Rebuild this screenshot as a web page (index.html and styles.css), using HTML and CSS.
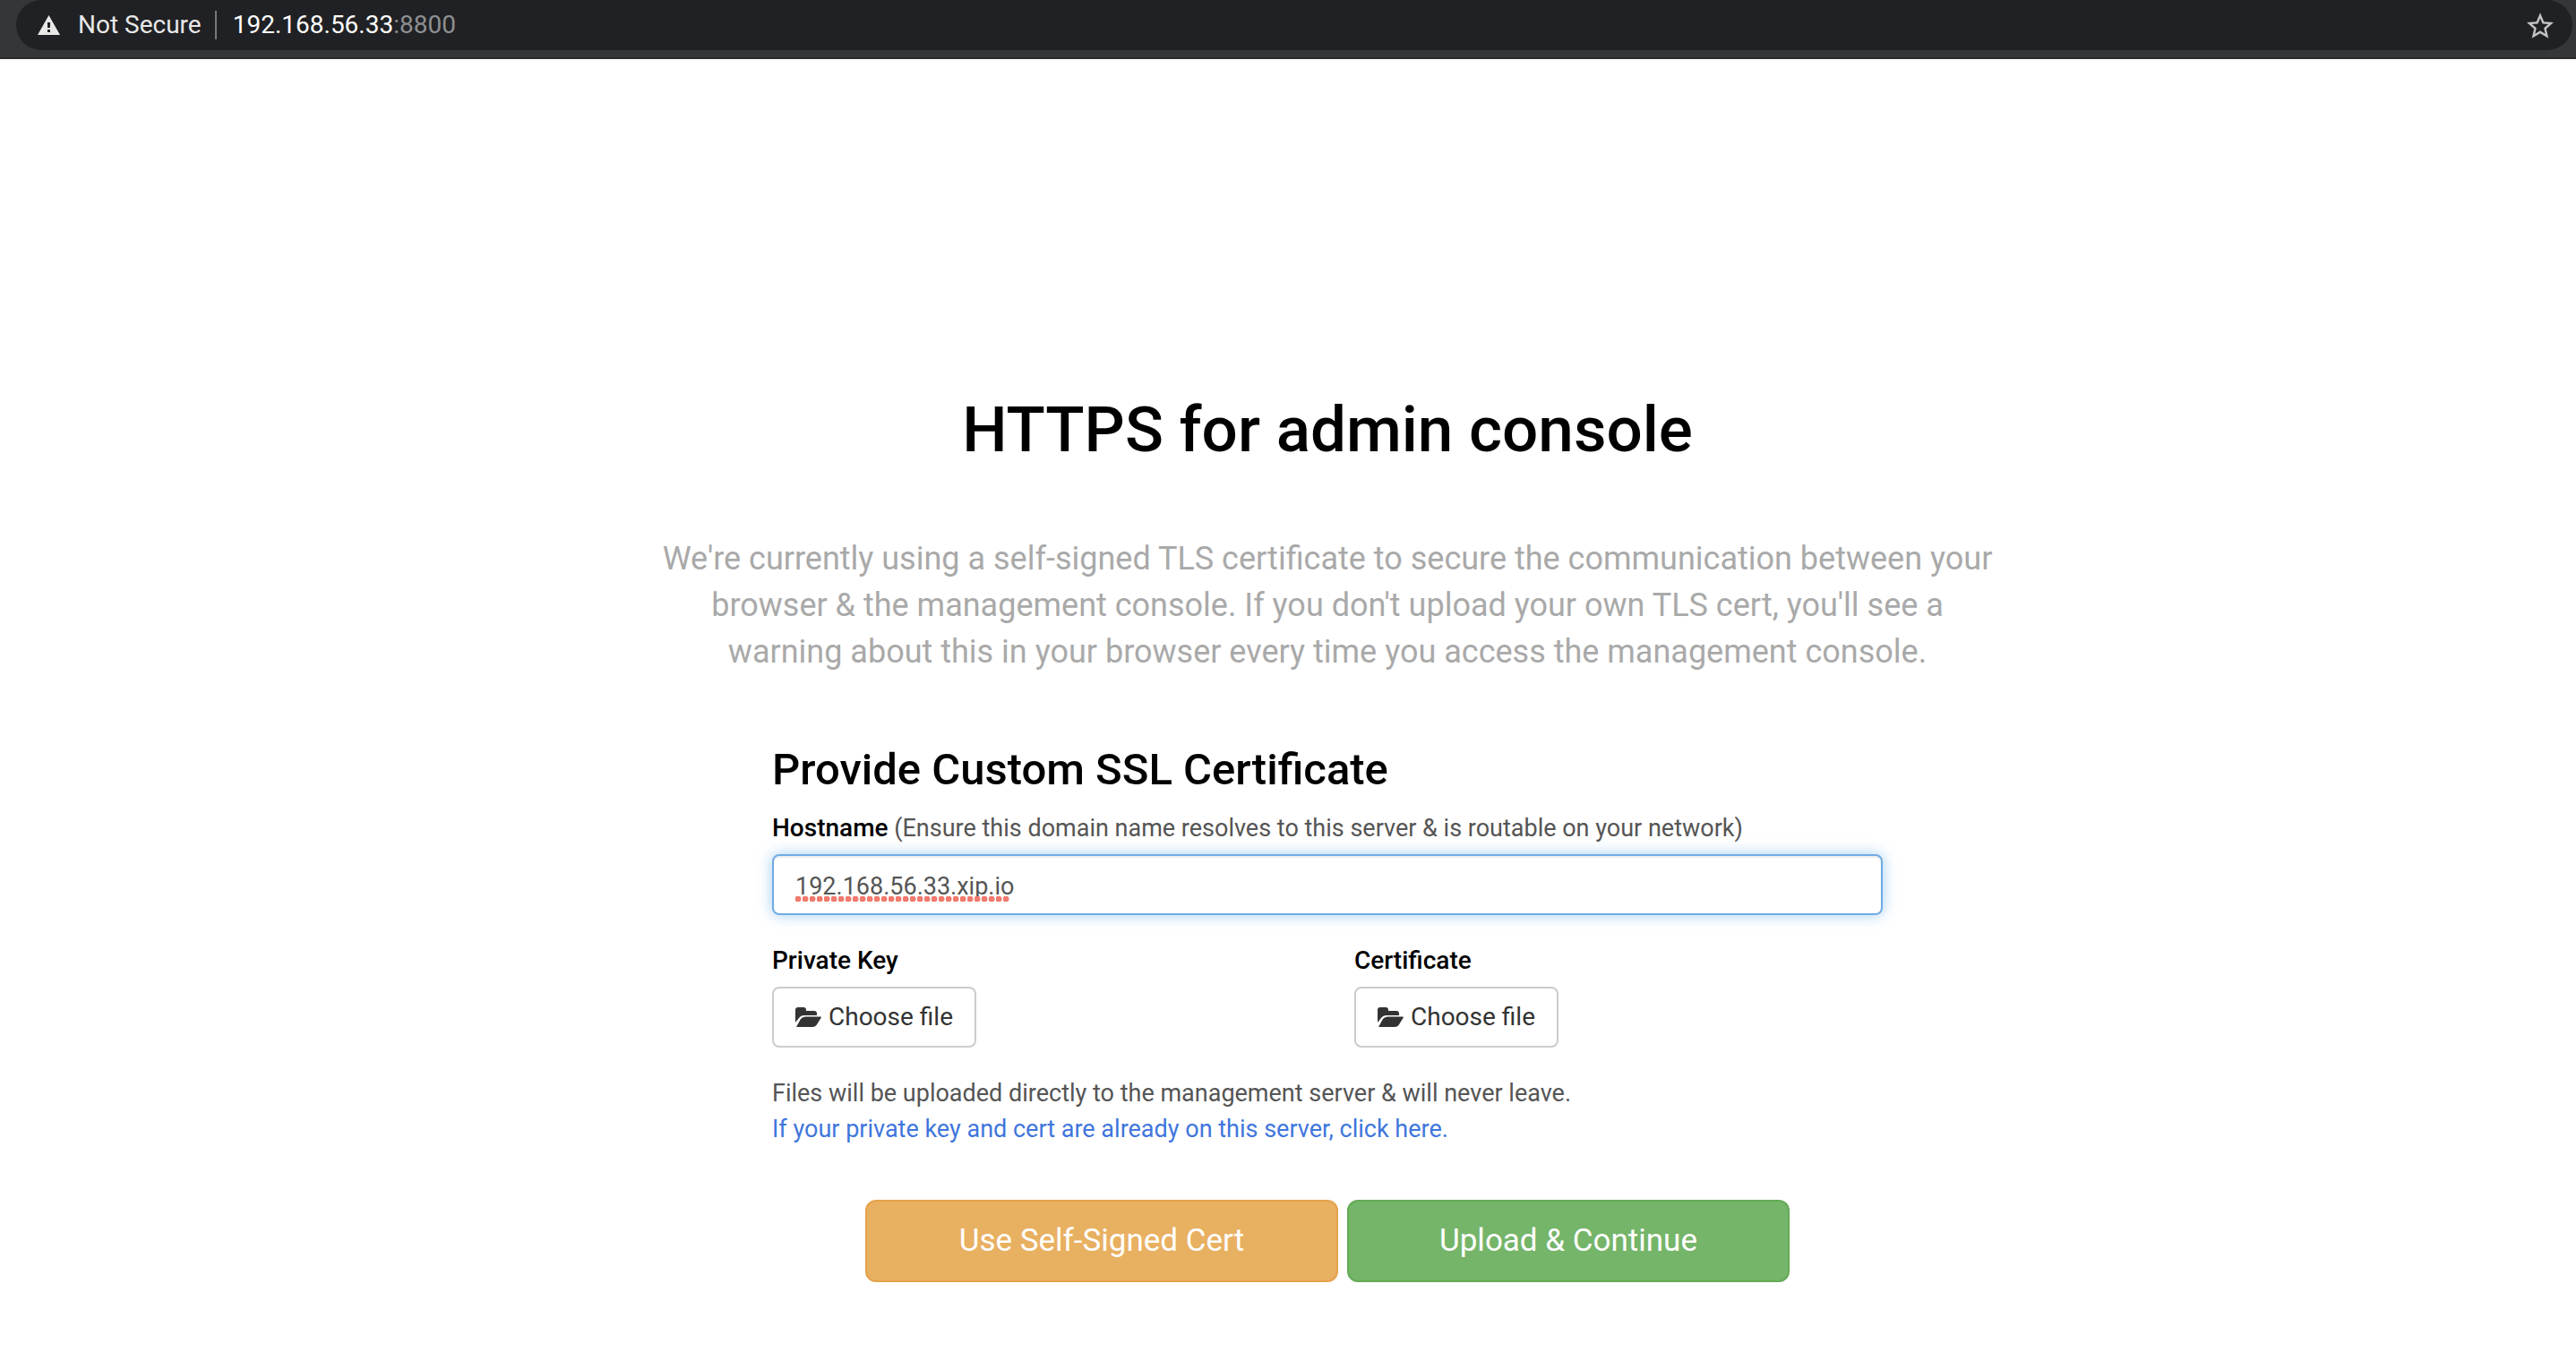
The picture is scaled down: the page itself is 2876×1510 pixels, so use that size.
FILE: index.html
```html
<!DOCTYPE html>
<html lang="en">
<head>
  <meta charset="utf-8">
  <title>HTTPS for admin console</title>
  <link rel="stylesheet" href="styles.css">
</head>
<body>
  <header class="toolbar">
    <div class="omnibox">
      <svg class="warning-icon" viewBox="0 0 25 22" aria-hidden="true">
        <path fill="currentColor" fill-rule="evenodd" d="M12.500 0L25 22H0ZM11 8V14H14V8ZM11 16V19H14V16Z"/>
      </svg>
      <span class="security">Not Secure</span>
      <span class="address">192.168.56.33<span class="port">:8800</span></span>
      <button class="bookmark" type="button" aria-label="Bookmark this page">
        <svg viewBox="2 2 20 19" aria-hidden="true">
          <path fill="currentColor" d="M22 9.240l-7.190-.620L12 2 9.190 8.630 2 9.240l5.460 4.730L5.820 21 12 17.270 18.180 21l-1.630-7.030L22 9.240zM12 15.400l-3.760 2.270 1-4.280-3.320-2.880 4.380-.380L12 6.100l1.710 4.040 4.380.380-3.320 2.880 1 4.280L12 15.400z"/>
        </svg>
      </button>
    </div>
  </header>

  <main class="page">
    <h1 class="title">HTTPS for admin console</h1>
    <p class="intro">We're currently using a self-signed TLS certificate to secure the communication between your browser &amp; the management console. If you don't upload your own TLS cert, you'll see a warning about this in your browser every time you access the management console.</p>

    <form class="cert-form">
      <h2 class="subtitle">Provide Custom SSL Certificate</h2>
      <div class="field">
        <div class="label-row">
          <label class="label" for="hostname">Hostname</label>
          <span id="hostname-hint">(Ensure this domain name resolves to this server &amp; is routable on your network)</span>
        </div>
        <div class="input-wrap">
          <input class="input" id="hostname" type="text" value="192.168.56.33.xip.io" aria-describedby="hostname-hint" spellcheck="false">
        </div>
      </div>

      <div class="files">
        <div class="field">
          <label class="label" for="private-key">Private Key</label>
          <button class="choose" id="private-key" type="button">
            <svg class="folder-icon" viewBox="0 0 29 22" aria-hidden="true">
              <path fill="currentColor" d="M0 17V3Q0 0 3 0H9Q12 0 12 3V4H21Q24 4 24 7V9H10Q6 9 4 12ZM1 22L6 13Q8 10.500 11 10.500H28Q29.500 10.500 28.500 12L23.500 20Q22 22 19 22Z"/>
            </svg>
            Choose file
          </button>
        </div>
        <div class="field">
          <label class="label" for="certificate">Certificate</label>
          <button class="choose" id="certificate" type="button">
            <svg class="folder-icon" viewBox="0 0 29 22" aria-hidden="true">
              <path fill="currentColor" d="M0 17V3Q0 0 3 0H9Q12 0 12 3V4H21Q24 4 24 7V9H10Q6 9 4 12ZM1 22L6 13Q8 10.500 11 10.500H28Q29.500 10.500 28.500 12L23.500 20Q22 22 19 22Z"/>
            </svg>
            Choose file
          </button>
        </div>
      </div>

      <p class="note">Files will be uploaded directly to the management server &amp; will never leave.<br>
        <a class="link" href="#server-path">If your private key and cert are already on this server, click here.</a></p>

      <div class="actions">
        <button class="action action-warning" type="button">Use Self-Signed Cert</button>
        <button class="action action-success" type="submit">Upload &amp; Continue</button>
      </div>
    </form>
  </main>
</body>
</html>
```
FILE: styles.css
```css
* {
  box-sizing: border-box;
}

body {
  margin: 0;
  background: #fff;
  color: #555;
  font-family: Roboto, "Liberation Sans", sans-serif;
  font-size: 27px;
  line-height: 40px;
}

h1,
h2,
p {
  margin: 0;
}

button,
input {
  font: inherit;
}

/* Browser address bar */
.toolbar {
  padding: 0 4px 8px 18px;
  background: #35363a;
  border-bottom: 2px solid #292a2c;
}

.omnibox {
  display: flex;
  align-items: center;
  height: 56px;
  padding: 0 21px 0 24px;
  border-radius: 28px;
  background: #202124;
  font-size: 28px;
  line-height: 32px;
}

.warning-icon {
  width: 25px;
  height: 22px;
  color: #e8e8e8;
}

.security {
  margin-left: 20px;
  padding-right: 15px;
  border-right: 2px solid #77787a;
  color: #e8e8e8;
}

.address {
  margin-left: 18px;
  color: #fff;
}

.port {
  color: #8f9092;
}

.bookmark {
  display: flex;
  margin-left: auto;
  padding: 0;
  border: 0;
  background: none;
  color: #c4c4c4;
}

.bookmark svg {
  width: 30px;
  height: 29px;
}

/* Setup page */
.page {
  display: flex;
  flex-direction: column;
  align-items: center;
  padding: 374px 0 78px 88px;
}

.title {
  color: #000;
  font-size: 71px;
  font-weight: 500;
  line-height: 80px;
}

.intro {
  max-width: 1500px;
  margin: 78px 0;
  color: #a9a9a9;
  font-size: 36px;
  line-height: 52px;
  text-align: center;
}

.cert-form {
  display: flex;
  flex-direction: column;
  width: 100%;
  max-width: 1240px;
}

.subtitle {
  margin-bottom: 17px;
  color: #000;
  font-size: 49px;
  font-weight: 500;
  line-height: 56px;
}

.field {
  display: flex;
  flex-direction: column;
  align-items: flex-start;
  gap: 9px;
}

.label {
  color: #000;
  font-size: 28px;
  font-weight: 500;
}

.input-wrap {
  position: relative;
  width: 100%;
}

/* Spell-check marks under the typed hostname */
.input-wrap::after {
  content: "";
  position: absolute;
  top: 47px;
  left: 26px;
  width: 240px;
  height: 6px;
  background: radial-gradient(circle at 3px 3px, #f07a6c 3px, transparent 4px) 0 0 / 8px 6px;
  pointer-events: none;
}

.input {
  display: block;
  width: 100%;
  height: 68px;
  padding: 4px 24px 0;
  border: 2px solid #71abe4;
  border-radius: 8px;
  outline: 0;
  background: #fff;
  box-shadow: inset 0 2px 2px rgba(0, 0, 0, 0.08), 0 0 16px rgba(102, 175, 233, 0.6);
  color: #555;
}

.files {
  display: grid;
  grid-template-columns: 1fr 1fr;
  gap: 60px;
  margin: 31px 0;
}

.choose {
  display: flex;
  align-items: center;
  gap: 8px;
  height: 68px;
  padding: 0 24px;
  border: 2px solid #ccc;
  border-radius: 8px;
  background: #fff;
  color: #333;
  font-size: 28px;
}

.folder-icon {
  width: 29px;
  height: 22px;
}

.link {
  color: #3f76dc;
  text-decoration: none;
}

.actions {
  display: flex;
  justify-content: center;
  gap: 10px;
  margin-top: 59px;
}

.action {
  height: 92px;
  padding: 0 100px;
  border: 2px solid;
  border-radius: 12px;
  color: #fff;
  font-size: 35px;
}

.action-warning {
  min-width: 528px;
  border-color: #e5a24c;
  background: #e8b061;
}

.action-success {
  min-width: 494px;
  border-color: #64ab57;
  background: #75b569;
}
```
